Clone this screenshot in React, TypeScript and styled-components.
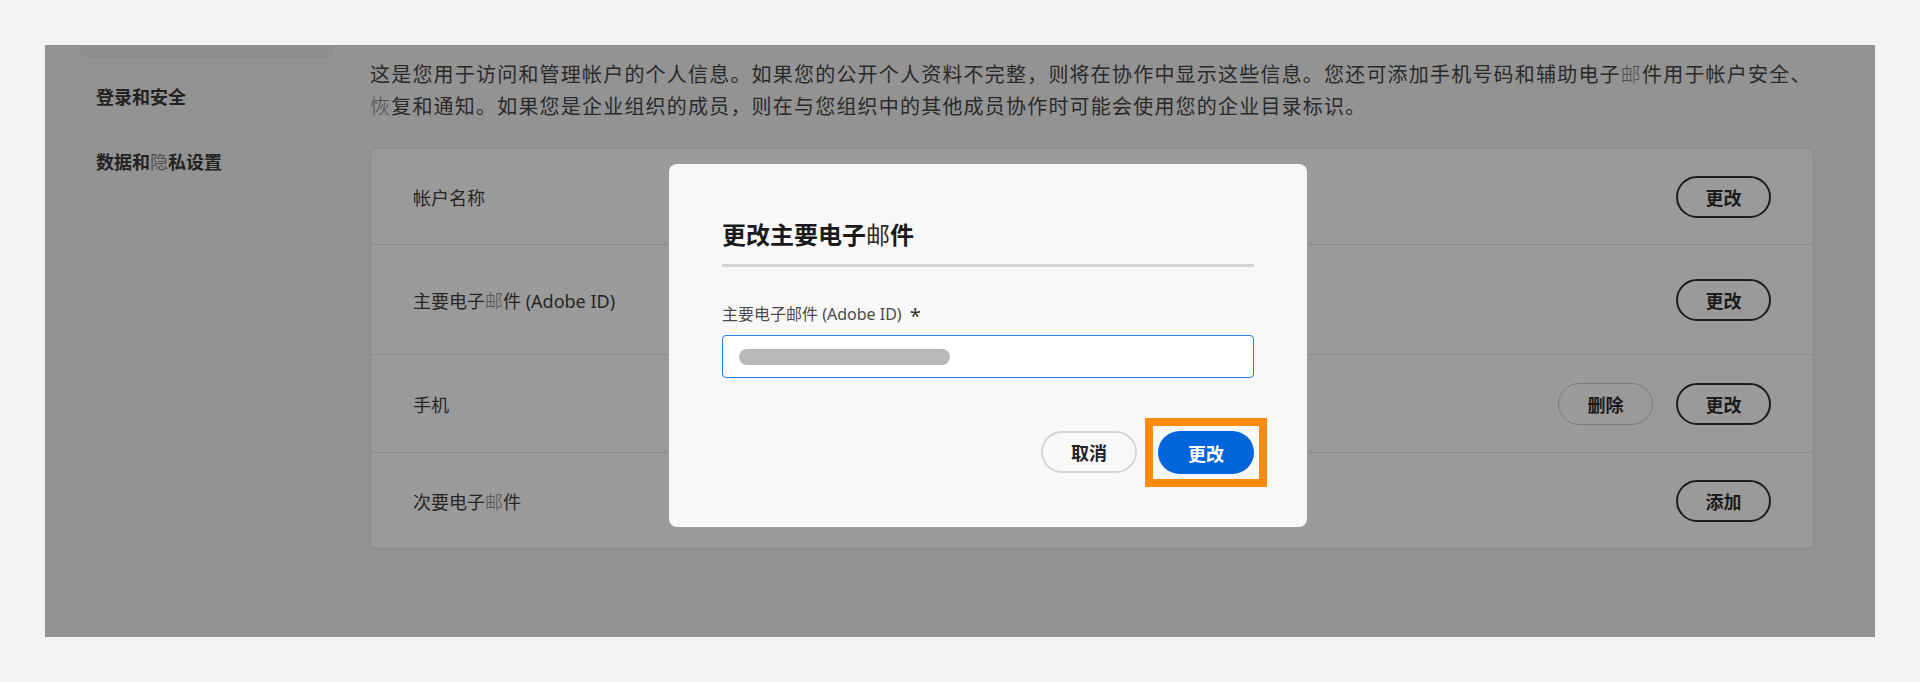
import React from 'react';
import styled, { createGlobalStyle } from 'styled-components';

const GlobalStyle = createGlobalStyle`
  html, body {
    margin: 0;
    padding: 0;
    background: #f3f2f5;
    font-family: "Noto Sans", "Noto Sans CJK SC", sans-serif;
  }
`;

const Page = styled.div`
  padding: 45px;
  height: 682px;
  box-sizing: border-box;
`;

const Panel = styled.div`
  position: relative;
  height: 592px;
  overflow: hidden;
  background: #939393;
  display: grid;
  grid-template-columns: 254px 1444px;
  column-gap: 36px;
  padding: 0 61px 0 35px;
`;

const Sidebar = styled.nav`
  display: flex;
  flex-direction: column;
`;

const ActiveTab = styled.div`
  height: 13px;
  background: #8e8e8e;
  border-radius: 0 0 8px 8px;
`;

const SideList = styled.div`
  padding-top: 7px;
`;

const SideItem = styled.div`
  padding: 20px 16px;
  line-height: 25px;
  font-size: 18px;
  font-weight: 700;
  color: #222;
`;

const Main = styled.main`
  padding-top: 14px;
`;

const Intro = styled.p`
  margin: 0 0 25px;
  font-size: 20px;
  letter-spacing: 1.2px;
  line-height: 32px;
  color: #2a2a2a;
`;

// glyphs that the original renders with a thinner fallback face
const Dim = styled.span<{ $tone?: string; $weight?: number }>`
  color: ${p => p.$tone ?? '#4f4f4f'};
  font-weight: ${p => p.$weight ?? 300};
`;

const Card = styled.section`
  background: #9a9a9a;
  border: 1px solid #8d8d8d;
  border-radius: 6px;
  box-shadow: 0 1px 1px rgba(0, 0, 0, 0.06);
`;

const Row = styled.div<{ $h: number }>`
  height: ${p => p.$h}px;
  display: flex;
  align-items: center;
  justify-content: space-between;
  padding: 0 42px 0 42px;
  & + & {
    border-top: 1px solid #8c8c8c;
  }
`;

const RowLabel = styled.span`
  font-size: 18px;
  color: #262626;
`;

const Actions = styled.div`
  display: flex;
  gap: 23px;
`;

const PillButton = styled.button<{ $quiet?: boolean }>`
  box-sizing: border-box;
  height: 42px;
  min-width: 95px;
  padding: 0 24px;
  border-radius: 21px;
  border: ${p => (p.$quiet ? '1.5px solid #7d7d7d' : '2px solid #1d1d1d')};
  background: transparent;
  font-family: inherit;
  font-size: 18px;
  font-weight: 700;
  color: #1b1b1b;
`;

const Dialog = styled.div`
  position: absolute;
  left: 624px;
  top: 119px;
  width: 638px;
  height: 363px;
  box-sizing: border-box;
  padding: 56px 53px 53px;
  background: #f8f8f8;
  border-radius: 8px;
  display: flex;
  flex-direction: column;
`;

const DialogTitle = styled.h2`
  margin: 0;
  font-size: 24px;
  line-height: 30px;
  font-weight: 700;
  color: #1a1a1a;
`;

const Divider = styled.hr`
  margin: 14px 0 0;
  border: none;
  height: 3px;
  background: #d5d5d5;
`;

const FieldLabel = styled.label`
  margin-top: 35px;
  font-size: 16px;
  line-height: 20px;
  color: #4b4b4b;
  display: flex;
  align-items: center;
  gap: 8px;
`;

const Star = styled.span`
  font-size: 20px;
  color: #333;
  line-height: 20px;
  padding-top: 4px;
`;

const Field = styled.div`
  margin-top: 9px;
  height: 43px;
  box-sizing: border-box;
  border: 1px solid #2680eb;
  border-radius: 4px;
  background: #fff;
  display: flex;
  align-items: center;
  padding-left: 16px;
`;

const Redacted = styled.div`
  width: 211px;
  height: 16px;
  border-radius: 8px;
  background: #b8b8b8;
`;

const Footer = styled.div`
  margin-top: auto;
  display: flex;
  justify-content: flex-end;
  gap: 21px;
`;

const CancelButton = styled.button`
  box-sizing: border-box;
  height: 42px;
  width: 96px;
  border-radius: 21px;
  border: 2px solid #d6d6d6;
  background: transparent;
  font-family: inherit;
  font-size: 18px;
  font-weight: 700;
  color: #222;
`;

const PrimaryButton = styled.button`
  position: relative;
  box-sizing: border-box;
  height: 43px;
  width: 96px;
  border-radius: 22px;
  border: none;
  background: #0265dc;
  font-family: inherit;
  font-size: 18px;
  font-weight: 700;
  color: #fff;

  &::after {
    content: '';
    position: absolute;
    inset: -13px;
    border: 8px solid #fa8b0c;
    pointer-events: none;
  }
`;

const rows = [
  { h: 95, label: <>帐户名称</>, actions: ['更改'] },
  { h: 109, label: <>主要电子<Dim>邮</Dim>件 (Adobe ID)</>, actions: ['更改'] },
  { h: 97, label: <>手机</>, actions: ['删除', '更改'] },
  { h: 95, label: <>次要电子<Dim>邮</Dim>件</>, actions: ['添加'] },
];

export default function App() {
  return (
    <>
      <GlobalStyle />
      <Page>
        <Panel>
          <Sidebar>
            <ActiveTab />
            <SideList>
              <SideItem>登录和安全</SideItem>
              <SideItem>数据和<Dim $weight={400} $tone="#505050">隐</Dim>私设置</SideItem>
            </SideList>
          </Sidebar>
          <Main>
            <Intro>
              这是您用于访问和管理帐户的个人信息。如果您的公开个人资料不完整，则将在协作中显示这些信息。您还可添加手机号码和辅助电子<Dim>邮</Dim>件用于帐户安全、<Dim>恢</Dim>复和通知。如果您是企业组织的成员，则在与您组织中的其他成员协作时可能会使用您的企业目录标识。
            </Intro>
            <Card>
              {rows.map((r, i) => (
                <Row key={i} $h={r.h}>
                  <RowLabel>{r.label}</RowLabel>
                  <Actions>
                    {r.actions.map(a => (
                      <PillButton key={a} $quiet={a === '删除'}>{a}</PillButton>
                    ))}
                  </Actions>
                </Row>
              ))}
            </Card>
          </Main>
          <Dialog>
            <DialogTitle>更改主要电子<Dim $weight={400} $tone="#2a2a2a">邮</Dim>件</DialogTitle>
            <Divider />
            <FieldLabel>
              主要电子邮件 (Adobe ID)
              <Star>*</Star>
            </FieldLabel>
            <Field>
              <Redacted />
            </Field>
            <Footer>
              <CancelButton>取消</CancelButton>
              <PrimaryButton>更改</PrimaryButton>
            </Footer>
          </Dialog>
        </Panel>
      </Page>
    </>
  );
}
